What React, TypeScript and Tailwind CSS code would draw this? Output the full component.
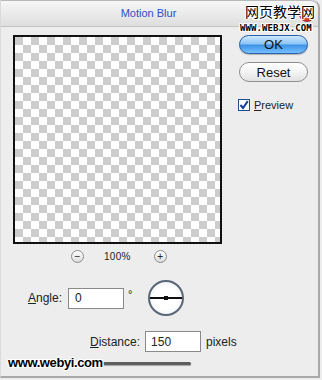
const font = "font-['Liberation_Sans',Arial,sans-serif]";
const outline =
  "[text-shadow:1px_0_0_#fff,-1px_0_0_#fff,0_1px_0_#fff,0_-1px_0_#fff,1px_1px_0_#fff,-1px_-1px_0_#fff,1px_-1px_0_#fff,-1px_1px_0_#fff]";

const RoundIcon = ({ sign }: { sign: string }) => (
  <div className="w-[13px] h-[13px] rounded-full border border-[#8c8c8c] bg-gradient-to-b from-white to-[#dcdcdc] flex items-center justify-center text-[10px] leading-none text-[#222]">
    {sign}
  </div>
);

export default function App() {
  return (
    <div
      className={`relative w-[322px] h-[380px] bg-[#ededed] text-[#222] overflow-hidden ${font}`}
    >
      <div className="w-[320px] h-[378px] border-l border-r-2 border-b-2 border-l-[#dadada] border-r-[#a9a9a9] border-b-[#a9a9a9] rounded-tr-[8px] flex flex-col">
        {/* title bar */}
        <div className="h-[27px] shrink-0 border-t border-[#b8b8b8] border-b border-b-[#c4c4c4] rounded-tr-[8px] bg-gradient-to-b from-[#f7f7f7] to-[#dedede] flex items-center justify-center pr-[22px] relative">
          <span className="text-[11px] text-[#2f4fc2]">Motion Blur</span>
          <div className="absolute right-[3px] top-[5px] w-[16px] h-[16px] rounded-full border border-[#9a2a2a] bg-[radial-gradient(circle_at_40%_30%,#ffb0a8,#e0443a_55%,#a81e18)]" />
        </div>

        {/* preview + buttons */}
        <div className="flex pt-[8px]">
          <div className="ml-[12px] flex flex-col">
            <div className="w-[209px] h-[209px] border-2 border-[#111] bg-[conic-gradient(#fff_25%,#cdcdcd_0_50%,#fff_0_75%,#cdcdcd_0)] bg-[length:16px_16px]" />
            <div className="flex items-center h-[13px] mt-[6px]">
              <div className="ml-[58px]">
                <RoundIcon sign="−" />
              </div>
              <span className="ml-[20px] text-[10px] tracking-[0.3px]">100%</span>
              <div className="ml-[23px]">
                <RoundIcon sign="+" />
              </div>
            </div>
          </div>

          <div className="ml-[17px] flex flex-col w-[69px]">
            <button className="h-[19px] rounded-full border border-[#2a5fa8] bg-[linear-gradient(to_bottom,#cfe8fc_0%,#8cc5f6_45%,#3f93e6_55%,#74c0ff_100%)] text-[13px] leading-none text-[#111] shadow-[0_1px_1px_rgba(0,0,0,0.25)]">
              OK
            </button>
            <button className="h-[20px] mt-[8px] rounded-full border border-[#8e8e8e] bg-[linear-gradient(to_bottom,#ffffff_0%,#f4f4f4_50%,#e2e2e2_100%)] text-[13px] leading-none text-[#111]">
              Reset
            </button>
            <label className="flex items-center mt-[15px] -ml-[1px]">
              <span className="w-[12px] h-[12px] border border-[#1d4f86] bg-white flex items-center justify-center">
                <svg width="10" height="10" viewBox="0 0 10 10">
                  <path d="M1.5 5 L4 8 L8.8 1.2" fill="none" stroke="#1c3f9e" strokeWidth="2" />
                </svg>
              </span>
              <span className="ml-[4px] text-[11px]">
                <span className="underline">P</span>review
              </span>
            </label>
          </div>
        </div>

        {/* angle */}
        <div className="flex items-center h-[34px] mt-[18px] text-[12px]">
          <span className="ml-[27px]">
            <span className="underline">A</span>ngle:
          </span>
          <div className="ml-[6px] w-[56px] h-[21px] bg-white border border-[#8a8a8a] flex items-center pl-[6px]">
            0
          </div>
          <span className="ml-[4px] -mt-[8px] text-[11px]">°</span>
          <div className="ml-[16px] w-[36px] h-[36px] rounded-full border-2 border-[#5a6678] bg-[radial-gradient(circle,#ffffff_50%,#e4e8ee)] flex items-center justify-center relative">
            <div className="w-full h-[1.5px] bg-[#111]" />
            <div className="absolute w-[4px] h-[4px] bg-[#111]" />
          </div>
        </div>

        {/* distance */}
        <div className="flex items-center h-[21px] mt-[16px] text-[12px]">
          <span className="ml-[89px]">
            <span className="underline">D</span>istance:
          </span>
          <div className="ml-[5px] w-[56px] h-[21px] bg-white border border-[#8a8a8a] flex items-center pl-[5px]">
            150
          </div>
          <span className="ml-[5px]">pixels</span>
        </div>

        {/* slider */}
        <div className="ml-[98px] mt-[10px] w-[92px] h-[3px] rounded-full bg-[#5e5e5e] shadow-[0_1px_1px_rgba(0,0,0,0.3)]" />
      </div>

      {/* watermarks */}
      <div
        className={`absolute left-[245px] top-[4px] whitespace-nowrap text-[14px] leading-none text-black font-['Noto_Sans_CJK_SC',sans-serif] ${outline}`}
      >
        网页教学网
      </div>
      <div
        className={`absolute left-[240px] top-[24px] whitespace-nowrap text-[9px] leading-none font-bold tracking-[0.1px] text-black font-['DejaVu_Sans_Mono',monospace] ${outline}`}
      >
        WWW.WEBJX.COM
      </div>
      <div
        className={`absolute left-[8px] top-[356px] whitespace-nowrap text-[13px] leading-none font-bold tracking-[-0.4px] text-black ${outline}`}
      >
        www.webyi.com
      </div>
    </div>
  );
}
